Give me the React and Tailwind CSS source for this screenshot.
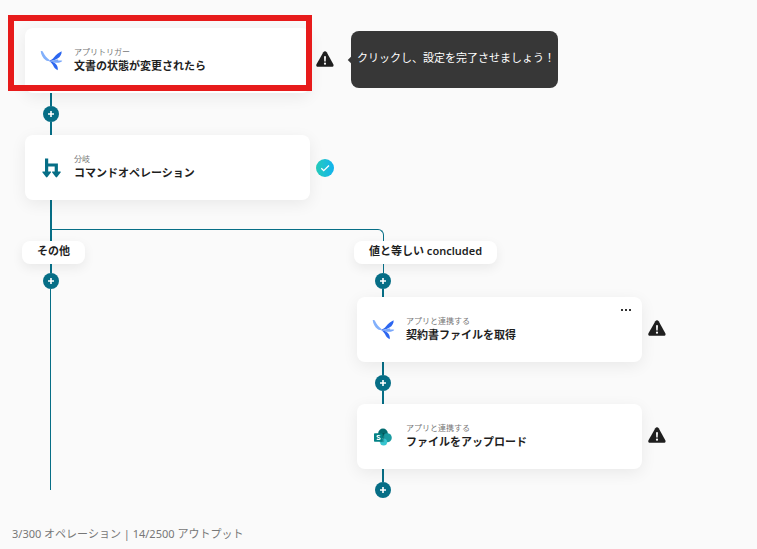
function BirdIcon() {
  return (
    <svg viewBox="0 0 24 24" className="size-6" aria-hidden="true">
      <path d="M1.700 2.200c1.100-.3 2.100.2 2.600 1.200 1.300 2.700 3.300 5.300 6.200 7.600l-.8.900c-1.200.2-2.300-.1-3.200-.9C4.200 9.200 1.900 5.600 1.700 2.200z" fill="#82b0fb" />
      <path d="M22.600 2.200c.3 2.900-1.300 5.600-4.100 7.400-2.700 1.700-5.700 2.600-8.900 2.300 2.500-.8 4-1.900 5.700-4 2-2.300 4.300-4.300 7.300-5.700z" fill="#2c66f0" />
      <path d="M11.500 11.900c2.500-.1 4.500-1.100 6.500-1.300 1.200-.1 1.600.5 1.300 1.100 1.300-.4 2.600-.3 4 0-1 1.500-3.600 2.200-6 2-2.200-.1-4.200-.6-5.800-1.800z" fill="#7aa7fa" />
      <path d="M9.600 11.900c2.300.1 4.900.9 6.700 2.500 2.100 1.900 2.900 4.200 2.400 6.800-2.300-.9-3.600-2.700-4.500-4.700-.9-2.100-2.300-3.600-4.600-4.600z" fill="#2c66f0" />
    </svg>
  );
}

function BranchIcon() {
  return (
    <svg viewBox="0 0 24 24" className="size-6" fill="#066e86" aria-hidden="true">
      <path d="M6 2.500h3.200v5h9.700v8h2.200c.7 0 .9.700.5 1.100l-3.500 4.400c-.4.500-1 .5-1.400 0l-3.500-4.400c-.4-.4-.2-1.100.5-1.100h2v-5H9.200v5h2.200c.7 0 .9.700.5 1.100l-3.500 4.400c-.4.500-1 .5-1.400 0l-3.500-4.400c-.4-.4-.2-1.100.5-1.100h2z" />
    </svg>
  );
}

function SharePointIcon() {
  return (
    <svg viewBox="0 0 24 24" className="size-6" aria-hidden="true">
      <circle cx="12" cy="8.300" r="4.800" fill="#036c70" />
      <circle cx="16.300" cy="12.700" r="4.500" fill="#1a9ba1" />
      <circle cx="12.600" cy="16.900" r="3.500" fill="#37c6d0" />
      <path d="M8 8h5.200v9.200H8z" fill="#000" opacity=".2" />
      <rect x="3" y="8.300" width="8.700" height="8.500" rx=".7" fill="#038387" />
      <path d="M9.200 10.900c-.8-.5-3.200-.8-3.200.4 0 1.500 3.200.9 3.200 2.300 0 1.400-2.500 1-3.400.4" fill="none" stroke="#fff" strokeWidth="1.100" />
    </svg>
  );
}

function WarningBadge() {
  return (
    <svg viewBox="0 0 18 18" className="mb-1 size-[18px] shrink-0" role="img" aria-label="警告">
      <path d="M7.300 2.200c.8-1.300 2.600-1.300 3.400 0l6.600 12c.7 1.300-.1 2.600-1.500 2.600H2c-1.400 0-2.200-1.300-1.500-2.600z" fill="#1f1f1f" />
      <path d="M8 6.200h2l-.3 5.300H8.300z" fill="#fff" />
      <circle cx="9" cy="13.700" r="1.100" fill="#fff" />
    </svg>
  );
}

function DoneBadge() {
  return (
    <svg viewBox="0 0 18 18" className="size-[18px] shrink-0" role="img" aria-label="完了">
      <defs>
        <linearGradient id="done" x1="0" y1="0" x2="1" y2="0">
          <stop offset="0" stopColor="#25cdbb" />
          <stop offset="1" stopColor="#12b2ee" />
        </linearGradient>
      </defs>
      <circle cx="9" cy="9" r="9" fill="url(#done)" />
      <path d="M5.300 9.300l2.400 2.400 5.300-5.200" fill="none" stroke="#fff" strokeWidth="1.300" />
    </svg>
  );
}

function AddButton() {
  return (
    <button type="button" aria-label="追加" className="flex size-4 shrink-0 items-center justify-center rounded-full bg-[#066e86]">
      <svg viewBox="0 0 6 6" className="size-1.5" aria-hidden="true">
        <path d="M3 0v6M0 3h6" stroke="#fff" strokeWidth="1.600" />
      </svg>
    </button>
  );
}

function Connector() {
  return (
    <div className="flex w-[52px] flex-col items-center">
      <div className="h-[13px] w-0.5 bg-[#066e86]" />
      <AddButton />
      <div className="h-[13px] w-0.5 bg-[#066e86]" />
    </div>
  );
}

function Step({ label, title, icon, badge, menu = false, highlight = false, tip }) {
  return (
    <div className="flex items-center gap-1.5">
      <div className="relative flex h-[65px] w-full max-w-[285px] items-center gap-[11px] rounded-lg bg-white pl-3.5 shadow-[0_4px_16px_rgba(0,0,0,0.07)]">
        {icon}
        <div className="min-w-0 flex-1 pb-0.5">
          <p className="text-[8px] leading-[13px] text-[#777]">{label}</p>
          <h3 className="text-[11px] leading-4 font-semibold text-[#1f1f1f]">{title}</h3>
        </div>
        {menu && (
          <button type="button" aria-label="メニュー" className="mt-2.5 mr-[11px] flex gap-0.5 self-start py-0.5">
            <span className="size-0.5 bg-[#333]" />
            <span className="size-0.5 bg-[#333]" />
            <span className="size-0.5 bg-[#333]" />
          </button>
        )}
        {highlight && (
          <div className="pointer-events-none absolute -top-[13px] -right-0.5 bottom-0.5 -left-[17px] border-6 border-[#e71b1b]" />
        )}
      </div>
      <div className="flex shrink-0 items-center">
        {badge}
        {tip && (
          <div role="tooltip" className="ml-[15px] flex items-center pb-0.5">
            <div className="-mr-1 size-1.5 rotate-45 bg-[#373737]" />
            <div className="rounded-lg bg-[#373737] pt-[18px] pr-[3px] pb-[22px] pl-1.5 text-[11px] leading-[17px] whitespace-nowrap text-white">
              {tip}
            </div>
          </div>
        )}
      </div>
    </div>
  );
}

function BranchLabel({ children }) {
  return (
    <div className="-ml-[3px] w-fit rounded-lg bg-white px-[15px] pt-0.5 pb-[5px] text-[11px] leading-4 font-semibold text-[#1f1f1f] shadow-[0_4px_12px_rgba(0,0,0,0.07)]">
      {children}
    </div>
  );
}

export default function App() {
  return (
    <div className="flex min-h-screen flex-col bg-[#fafafa] font-['Noto_Sans','Noto_Sans_CJK_JP',sans-serif]" lang="ja">
      <main className="pt-7 pl-[25px]">
        <Step
          label="アプリトリガー"
          title="文書の状態が変更されたら"
          icon={<BirdIcon />}
          badge={<WarningBadge />}
          tip="クリックし、設定を完了させましょう！"
          highlight
        />
        <Connector />
        <Step label="分岐" title="コマンドオペレーション" icon={<BranchIcon />} badge={<DoneBadge />} />

        <div className="ml-[25px] flex">
          <div className="h-[41px] w-0.5 bg-[#066e86]" />
          <div className="h-3 w-full max-w-[332px] self-end rounded-tr-md border-t border-r border-[#066e86]" />
        </div>

        <div className="grid grid-cols-[minmax(0,332px)_minmax(0,1fr)]">
          <section className="flex flex-col pb-2">
            <BranchLabel>その他</BranchLabel>
            <div className="flex w-[52px] flex-1 flex-col items-center">
              <div className="h-[9px] w-0.5 bg-[#066e86]" />
              <AddButton />
              <div className="w-0.5 flex-1 border-l border-[#066e86]" />
            </div>
          </section>
          <section>
            <BranchLabel>値と等しい concluded</BranchLabel>
            <div className="flex w-[52px] flex-col items-center">
              <div className="h-[9px] w-0.5 border-r border-[#066e86]" />
              <AddButton />
              <div className="h-2 w-0.5 bg-[#066e86]" />
            </div>
            <Step label="アプリと連携する" title="契約書ファイルを取得" icon={<BirdIcon />} badge={<WarningBadge />} menu />
            <Connector />
            <Step label="アプリと連携する" title="ファイルをアップロード" icon={<SharePointIcon />} badge={<WarningBadge />} />
            <div className="flex w-[52px] flex-col items-center">
              <div className="h-[13px] w-0.5 bg-[#066e86]" />
              <AddButton />
            </div>
          </section>
        </div>
      </main>
      <footer className="px-3 pt-7 pb-1.5 text-[11px] leading-4 text-[#777]">3/300 オペレーション | 14/2500 アウトプット</footer>
    </div>
  );
}
